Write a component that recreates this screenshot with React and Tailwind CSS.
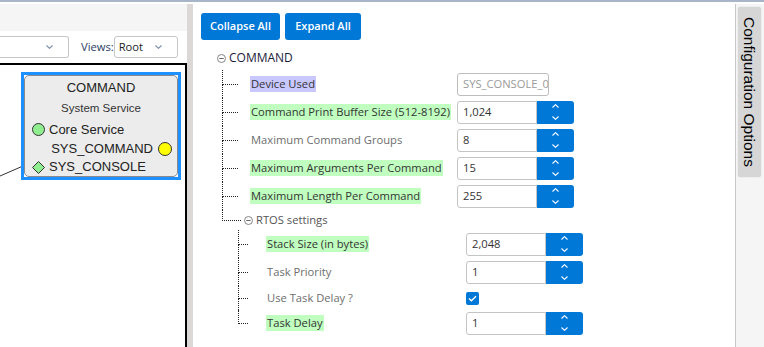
import React from 'react';

const ui = { fontFamily: '"Open Sans", "Noto Sans", sans-serif' };
const diagram = { fontFamily: '"Liberation Sans", Arial, sans-serif' };

const Chevron = ({ up, color = 'white' }) => (
    <svg width="7" height="4" viewBox="0 0 7 4">
        <path d={up ? 'M0.5 3.5 L3.5 0.7 L6.5 3.5' : 'M0.5 0.5 L3.5 3.3 L6.5 0.5'} stroke={color} strokeWidth="1.1" fill="none" />
    </svg>
);

const CircleMinus = () => (
    <svg width="9" height="9" viewBox="0 0 9 9" className="shrink-0">
        <circle cx="4.5" cy="4.5" r="4" stroke="#777" fill="white" strokeWidth="0.9" />
        <path d="M2.3 4.5 H6.7" stroke="#555" strokeWidth="0.9" />
    </svg>
);

const Connector = ({ last, w }) => (
    <div className={`flex flex-col shrink-0 ${w}`}>
        <div className="flex-1 border-l border-b border-dotted border-[#222]" />
        <div className={`flex-1 ${last ? '' : 'border-l border-dotted border-[#222]'}`} />
    </div>
);

const Label = ({ text, hl, w }) => {
    const bg = hl === 'green' ? 'bg-[#c0ffc0] text-[#333]' : hl === 'blue' ? 'bg-[#c8c8ff] text-[#333]' : 'text-[#6e6e6e]';
    return (
        <div className={`shrink-0 flex items-center ${w}`}>
            <span className={`px-px leading-[16px] whitespace-nowrap ${bg}`}>{text}</span>
        </div>
    );
};

const NumberInput = ({ value }) => (
    <div className="flex h-[23px]">
        <div className="w-[80px] h-full bg-white border border-[#c4c4c4] rounded-l-[3px] flex items-center pl-[5px] text-[#333]">
            {value}
        </div>
        <div className="w-[37px] h-full bg-[#0078d7] rounded-r-[3px] flex flex-col items-center justify-center gap-[8px]">
            <Chevron up />
            <Chevron />
        </div>
    </div>
);

const mainRows = [
    { label: 'Device Used', hl: 'blue', device: true },
    { label: 'Command Print Buffer Size (512-8192)', hl: 'green', value: '1,024' },
    { label: 'Maximum Command Groups', value: '8' },
    { label: 'Maximum Arguments Per Command', hl: 'green', value: '15' },
    { label: 'Maximum Length Per Command', hl: 'green', value: '255' },
];

const subRows = [
    { label: 'Stack Size (in bytes)', hl: 'green', value: '2,048', h: 'h-[28px]' },
    { label: 'Task Priority', value: '1', h: 'h-[28px]' },
    { label: 'Use Task Delay ?', check: true, h: 'h-[24px]' },
    { label: 'Task Delay', hl: 'green', value: '1', h: 'h-[26px]' },
];

const Dropdown = ({ className, text }) => (
    <div className={`h-[22px] shrink-0 bg-white border-[#c6c6c6] flex items-center justify-between ${className}`}>
        <span className="pl-[4px] text-[#222]">{text}</span>
        <span className="pr-[15px] flex"><Chevron color="#7a8aa8" /></span>
    </div>
);

const App = () => {
    return (
        <div className="w-[764px] h-[347px] overflow-hidden flex flex-col bg-white text-[11.2px]" style={ui}>
            <div className="h-[2px] bg-[#a8b5c6] shrink-0" />
            <div className="h-[2px] bg-white shrink-0" />

            <div className="flex flex-1 min-h-0">
                {/* Left: diagram pane */}
                <div className="w-[187px] shrink-0 flex flex-col">
                    <div className="h-[27px] bg-[#f5f5f5] shrink-0" />
                    <div className="h-[32px] shrink-0 flex items-start pt-[5px]">
                        <Dropdown className="w-[69px] border-y border-r rounded-r-[3px]" text="" />
                        <span className="ml-[12px] shrink-0 whitespace-nowrap leading-[22px] text-[#2b3d66]">Views:</span>
                        <Dropdown className="w-[64px] border rounded-[3px]" text="Root" />
                    </div>
                    <div className="flex-1 relative bg-white border-t-2 border-r-2 border-black overflow-hidden">
                        <svg className="absolute left-0 top-0" width="185" height="280">
                            <path d="M0 111 L23 101 L32 101" stroke="#333" strokeWidth="1" fill="none" />
                        </svg>
                        <div className="absolute left-[21px] top-[7px] w-[160px] h-[108px] border-[3px] border-[#1e90ff]" style={diagram}>
                            <div className="w-full h-full bg-[#ececec] border border-[#8a8a8a] rounded-[5px] flex flex-col text-[#222]">
                                <div className="mt-[3px] h-[17px] text-[13px] leading-[17px] text-center">COMMAND</div>
                                <div className="mt-[2px] h-[22px] text-[11.5px] leading-[20px] text-center text-[#333]">System Service</div>
                                <div className="h-[19px] flex items-center pl-[7px] gap-[4px] text-[13px]">
                                    <svg width="13" height="13" viewBox="0 0 13 13"><circle cx="6.5" cy="6.5" r="6" fill="#90ee90" stroke="#333" strokeWidth="1" /></svg>
                                    <span>Core Service</span>
                                </div>
                                <div className="h-[19px] flex items-center justify-end pr-[5px] gap-[5px] text-[13px]">
                                    <span>SYS_COMMAND</span>
                                    <svg width="14" height="14" viewBox="0 0 14 14"><circle cx="7" cy="7" r="6.5" fill="#ffff00" stroke="#333" strokeWidth="1" /></svg>
                                </div>
                                <div className="h-[18px] flex items-center pl-[7px] gap-[4px] text-[13px]">
                                    <svg width="13" height="13" viewBox="0 0 13 13"><polygon points="6.5,0.5 12.5,6.5 6.5,12.5 0.5,6.5" fill="#90ee90" stroke="#333" strokeWidth="1" /></svg>
                                    <span>SYS_CONSOLE</span>
                                </div>
                            </div>
                        </div>
                    </div>
                </div>

                {/* Splitter */}
                <div className="w-[6px] shrink-0 bg-[#dcd8d8]" />

                {/* Middle: configuration tree */}
                <div className="flex-1 flex flex-col bg-white">
                    <div className="flex gap-[5px] pt-[9px] pl-[8px]">
                        <button className="w-[79px] h-[27px] bg-[#0078d7] rounded-[3px] text-white text-[11px] font-semibold">Collapse All</button>
                        <button className="w-[76px] h-[27px] bg-[#0078d7] rounded-[3px] text-white text-[11px] font-semibold">Expand All</button>
                    </div>

                    <div className="mt-[6px] h-[24px] flex items-center pl-[24px] gap-[3px]">
                        <CircleMinus />
                        <span className="text-[12px] text-[#1c1c3c]">COMMAND</span>
                    </div>

                    <div className="pl-[29px] flex flex-col">
                        {mainRows.map((r) => (
                            <div key={r.label} className="h-[28px] flex">
                                <Connector w="w-[16px]" />
                                <div className="ml-[12px] flex items-center">
                                    <Label text={r.label} hl={r.hl} w="w-[207px]" />
                                    {r.device ? (
                                        <div className="w-[92px] h-[23px] border border-[#bdbdbd] rounded-[3px] flex items-center pl-[5px] overflow-hidden whitespace-nowrap text-[#9a9a9a]">
                                            SYS_CONSOLE_0
                                        </div>
                                    ) : (
                                        <NumberInput value={r.value} />
                                    )}
                                </div>
                            </div>
                        ))}
                        <div className="h-[20px] flex">
                            <Connector w="w-[19px]" last />
                            <div className="flex items-center gap-[3px] ml-[3px]">
                                <CircleMinus />
                                <span className="text-[#555]">RTOS settings</span>
                            </div>
                        </div>
                    </div>

                    <div className="pl-[45px] flex flex-col">
                        {subRows.map((r, i) => (
                            <div key={r.label} className={`${r.h} flex`}>
                                <Connector w="w-[10px]" last={i === subRows.length - 1} />
                                <div className="ml-[18px] flex items-center">
                                    <Label text={r.label} hl={r.hl} w="w-[200px]" />
                                    {r.check ? (
                                        <div className="w-[13px] h-[13px] bg-[#0078d7] rounded-[2px] flex items-center justify-center">
                                            <svg width="9" height="7" viewBox="0 0 9 7"><path d="M1 3.5 L3.4 5.8 L8 1.2" stroke="white" strokeWidth="1.4" fill="none" /></svg>
                                        </div>
                                    ) : (
                                        <NumberInput value={r.value} />
                                    )}
                                </div>
                            </div>
                        ))}
                    </div>
                </div>

                {/* Right side tabs */}
                <div className="w-px shrink-0 bg-[#c8c8c8]" />
                <div className="w-[28px] shrink-0 bg-[#f5f5f5] pt-[3px] pl-[2px]">
                    <div className="w-[23px] h-[170px] bg-[#d6d6d6] rounded-[3px] shadow-[0_0_1px_rgba(0,0,0,0.3)] flex items-center justify-center" style={diagram}>
                        <span className="[writing-mode:vertical-rl] text-[15.5px] text-black whitespace-nowrap">Configuration Options</span>
                    </div>
                </div>
            </div>
        </div>
    );
};

export default App;
